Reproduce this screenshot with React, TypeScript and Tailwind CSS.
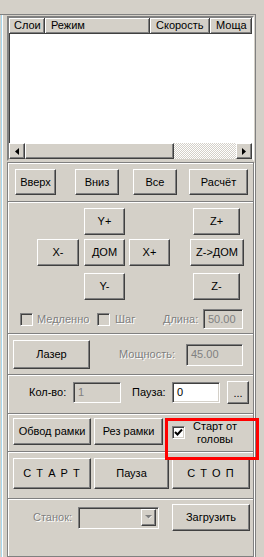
import React from "react";

// classic win98-ish control panel
const raised =
  "border border-t-white border-l-white border-r-[#404040] border-b-[#404040] shadow-[inset_-1px_-1px_0_#808080]";
const sunken =
  "border border-t-[#808080] border-l-[#808080] border-r-white border-b-white shadow-[inset_1px_1px_0_#404040,inset_-1px_-1px_0_#d4d0c8]";
const dim = "text-[#808080] [text-shadow:1px_1px_0_#fff]";

function Btn({ className = "", children }: { className?: string; children: React.ReactNode }) {
  return (
    <div
      className={`flex shrink-0 items-center justify-center bg-[#d4d0c8] text-[11px] text-black ${raised} ${className}`}
    >
      {children}
    </div>
  );
}

function Field({
  className = "",
  value,
  enabled = false,
}: {
  className?: string;
  value: string;
  enabled?: boolean;
}) {
  return (
    <div
      className={`flex shrink-0 items-center px-[4px] text-[11px] ${sunken} ${
        enabled ? "bg-white text-black" : "bg-[#d4d0c8] text-[#808080]"
      } ${className}`}
    >
      {value}
    </div>
  );
}

function Check({ checked = false, enabled = false }: { checked?: boolean; enabled?: boolean }) {
  return (
    <div
      className={`flex h-[13px] w-[13px] shrink-0 items-center justify-center ${sunken} ${
        enabled ? "bg-white" : "bg-[#d4d0c8]"
      }`}
    >
      {checked && (
        <svg width="9" height="9" viewBox="0 0 9 9">
          <path d="M1 4 L3.5 6.5 L8 1.5" fill="none" stroke="#000" strokeWidth="2" />
        </svg>
      )}
    </div>
  );
}

function Sep() {
  return <div className="h-[2px] border-t border-b border-t-[#808080] border-b-white" />;
}

function Arrow({ dir }: { dir: "left" | "right" }) {
  return (
    <div className={`flex h-[16px] w-[16px] shrink-0 items-center justify-center bg-[#d4d0c8] ${raised}`}>
      <svg width="4" height="7" viewBox="0 0 4 7">
        {dir === "left" ? <path d="M4 0 L0 3.5 L4 7 Z" fill="#000" /> : <path d="M0 0 L4 3.5 L0 7 Z" fill="#000" />}
      </svg>
    </div>
  );
}

function HeaderCell({ className = "", children }: { className?: string; children?: React.ReactNode }) {
  return (
    <div
      className={`flex h-[16px] shrink-0 items-center overflow-hidden whitespace-nowrap border-r border-b border-r-[#404040] border-b-[#404040] bg-[#d4d0c8] px-[5px] text-[11px] text-black shadow-[inset_1px_1px_0_#fff,inset_-1px_-1px_0_#808080] ${className}`}
    >
      {children}
    </div>
  );
}

export default function App() {
  return (
    <div className="relative flex h-[557px] w-[264px] overflow-hidden bg-[#d4d0c8] font-['Liberation_Sans',Arial,sans-serif] text-[11px] leading-none">
      {/* left edge strip */}
      <div className="mt-[14px] flex border-t border-t-[#808080]">
        <div className="w-px bg-[#d4d0c8]" />
        <div className="w-px bg-[#a8d8ee]" />
        <div className="w-px bg-white" />
      </div>

      <div className="mt-[14px] flex w-[253px] flex-col border-t border-r border-[#808080] pl-[4px] pt-px">
        {/* layers list */}
        <div className="flex h-[154px] w-[247px] flex-col border-2 border-t-[#808080] border-l-[#808080] border-r-white border-b-[#d4d0c8] bg-white shadow-[inset_1px_1px_0_#404040]">
          <div className="flex overflow-hidden">
            <HeaderCell className="w-[36px]">Слои</HeaderCell>
            <HeaderCell className="w-[105px] pl-[6px]">Режим</HeaderCell>
            <HeaderCell className="w-[60px] pl-[6px]">Скорость</HeaderCell>
            <HeaderCell className="w-[42px] pl-[6px]">Моща</HeaderCell>
          </div>
          <div className="flex-1" />
          <div className="flex h-[16px]">
            <Arrow dir="left" />
            <div className={`h-[16px] w-[149px] bg-[#d4d0c8] ${raised}`} />
            <div className="h-[16px] flex-1 bg-[repeating-conic-gradient(#fff_0_25%,#d4d0c8_0_50%)] bg-[length:2px_2px]" />
            <Arrow dir="right" />
          </div>
        </div>

        {/* controls group */}
        <div className="mt-px flex h-[420px] w-[247px] flex-col border border-[#808080] shadow-[inset_1px_1px_0_#fff,1px_1px_0_#fff]">
          {/* order / calc */}
          <div className="flex h-[38px] pt-[6px]">
            <Btn className="ml-[7px] h-[26px] w-[41px]">Вверх</Btn>
            <Btn className="ml-[19px] h-[26px] w-[44px]">Вниз</Btn>
            <Btn className="ml-[14px] h-[26px] w-[44px]">Все</Btn>
            <Btn className="ml-[12px] h-[26px] w-[59px]">Расчёт</Btn>
          </div>
          <Sep />

          {/* jog */}
          <div className="flex h-[130px] flex-col pt-[5px]">
            <div className="flex">
              <Btn className="ml-[76px] h-[27px] w-[41px]">Y+</Btn>
              <Btn className="ml-[68px] h-[27px] w-[47px]">Z+</Btn>
            </div>
            <div className="mt-[4px] flex">
              <Btn className="ml-[29px] h-[27px] w-[42px]">X-</Btn>
              <Btn className="ml-[5px] h-[27px] w-[41px]">ДОМ</Btn>
              <Btn className="ml-[4px] h-[27px] w-[41px]">X+</Btn>
              <Btn className="ml-[20px] h-[27px] w-[54px]">Z-&gt;ДОМ</Btn>
            </div>
            <div className="mt-[7px] flex">
              <Btn className="ml-[76px] h-[27px] w-[41px]">Y-</Btn>
              <Btn className="ml-[68px] h-[27px] w-[47px]">Z-</Btn>
            </div>
            <div className="mt-[9px] flex h-[20px] items-center">
              <div className="ml-[12px]">
                <Check />
              </div>
              <span className={`ml-[4px] w-[60px] ${dim}`}>Медленно</span>
              <Check />
              <span className={`ml-[5px] w-[48px] ${dim}`}>Шаг</span>
              <span className={`w-[40px] ${dim}`}>Длина:</span>
              <Field className="h-[20px] w-[40px]" value="50.00" />
            </div>
          </div>
          <Sep />

          {/* laser */}
          <div className="flex h-[39px] items-start pt-[5px]">
            <div className="flex h-[29px] items-center">
              <Btn className="ml-[5px] h-[29px] w-[77px]">Лазер</Btn>
              <span className={`ml-[29px] w-[67px] ${dim}`}>Мощность:</span>
              <Field className="h-[22px] w-[57px]" value="45.00" />
            </div>
          </div>
          <Sep />

          {/* count / pause */}
          <div className="flex h-[37px] items-start pt-[5px]">
            <div className="flex h-[23px] items-center">
              <span className="ml-[21px] w-[44px] text-black">Кол-во:</span>
              <Field className="h-[21px] w-[48px]" value="1" />
              <span className="ml-[11px] w-[40px] text-black">Пауза:</span>
              <Field className="h-[21px] w-[48px]" value="0" enabled />
              <Btn className="ml-[7px] h-[23px] w-[22px] pt-[2px]">...</Btn>
            </div>
          </div>
          <Sep />

          {/* frame */}
          <div className="flex h-[36px] items-start pt-[3px]">
            <div className="flex h-[27px] items-center">
              <Btn className="ml-[5px] h-[27px] w-[78px]">Обвод рамки</Btn>
              <Btn className="ml-[3px] h-[27px] w-[69px]">Рез рамки</Btn>
              <div className="ml-[9px] mt-[2px]">
                <Check checked enabled />
              </div>
              <div className="mt-[2px] w-[60px] text-center leading-[13px] text-black">
                Старт от
                <br />
                головы
              </div>
            </div>
          </div>
          <Sep />

          {/* run */}
          <div className="flex h-[45px] pt-[5px]">
            <Btn className="ml-[5px] h-[31px] w-[78px] tracking-[1px]">С Т А Р Т</Btn>
            <Btn className="ml-[3px] h-[31px] w-[75px]">Пауза</Btn>
            <Btn className="ml-[3px] h-[31px] w-[78px] tracking-[1px]">С Т О П</Btn>
          </div>
          <Sep />

          {/* machine */}
          <div className="flex items-start pt-[4px]">
            <div className="flex h-[27px] items-center">
              <span className={`ml-[25px] w-[45px] ${dim}`}>Станок:</span>
              <div className={`flex h-[22px] w-[81px] items-center justify-end bg-[#d4d0c8] pr-[2px] ${sunken}`}>
                <div className={`flex h-[17px] w-[15px] items-center justify-center bg-[#d4d0c8] ${raised}`}>
                  <svg width="8" height="5" viewBox="0 0 8 5">
                    <path d="M1 1 L7 1 L4 4 Z" fill="#fff" />
                    <path d="M0 0 L7 0 L3.5 3.5 Z" fill="#808080" />
                  </svg>
                </div>
              </div>
              <Btn className="ml-[13px] h-[27px] w-[78px]">Загрузить</Btn>
            </div>
          </div>
        </div>
      </div>

      {/* highlight annotation */}
      <div className="absolute left-[165px] top-[418px] h-[42px] w-[94px] border-[3px] border-[#ff0000]" />
    </div>
  );
}
